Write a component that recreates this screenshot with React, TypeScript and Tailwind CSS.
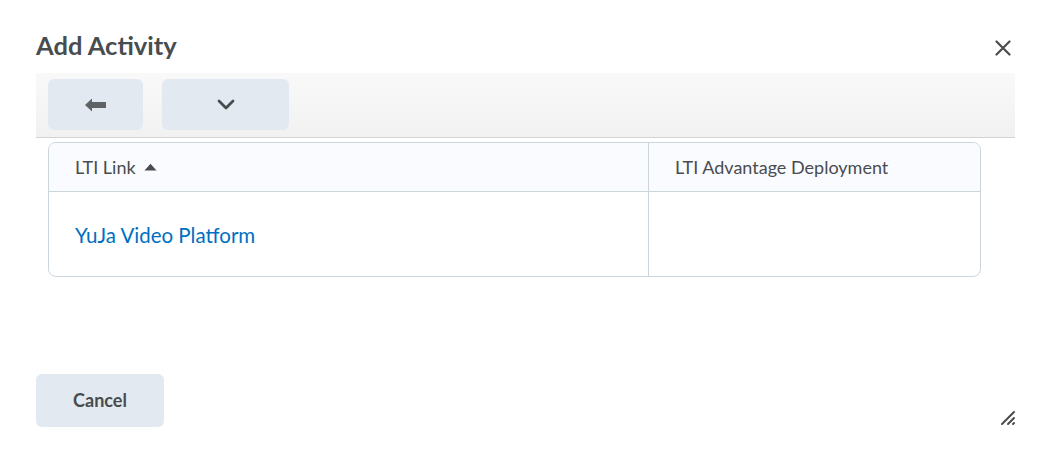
import React from "react";

function BackArrow() {
  return (
    <svg width="21" height="14" viewBox="0 0 21 14" fill="#5f6366">
      <path d="M0 7 L7 0.5 L7 4 L21 4 L21 10 L7 10 L7 13.5 Z" />
    </svg>
  );
}

function Chevron() {
  return (
    <svg width="18" height="11" viewBox="0 0 18 11" fill="none" stroke="#494c4e" strokeWidth="2.8" strokeLinecap="round" strokeLinejoin="round">
      <path d="M2 2 L9 9 L16 2" />
    </svg>
  );
}

export default function App() {
  return (
    <div
      className="relative w-[1049px] h-[461px] bg-white text-[#494c4e] overflow-hidden"
      style={{ fontFamily: "Lato, 'Noto Sans', sans-serif" }}
    >
      <div className="pl-[36px] pr-[34px]">
        {/* header */}
        <div className="flex items-center justify-between h-[73px] pt-[18px]">
          <h2 className="text-[25.5px] font-bold leading-none text-[#494c4e]">Add Activity</h2>
          <button className="w-[24px] h-[24px] flex items-center justify-center mt-[4px]">
            <svg width="16" height="16" viewBox="0 0 16 16" stroke="#494c4e" strokeWidth="2.2" strokeLinecap="round">
              <path d="M1.5 1.5 L14.5 14.5 M14.5 1.5 L1.5 14.5" />
            </svg>
          </button>
        </div>

        {/* toolbar */}
        <div className="h-[65px] bg-gradient-to-b from-[#f9f9f9] to-[#f1f1f1] border-b border-[#d3d3d3] flex items-start gap-[19px] pl-[12px] pt-[6px]">
          <button className="w-[95px] h-[51px] rounded-[6px] bg-[#e3e9f1] flex items-center justify-center">
            <BackArrow />
          </button>
          <button className="w-[127px] h-[51px] rounded-[6px] bg-[#e3e9f1] flex items-center justify-center">
            <Chevron />
          </button>
        </div>

        {/* table */}
        <div className="mt-[4px] ml-[12px] w-[933px] border border-[#cdd5dc] rounded-[8px] overflow-hidden">
          <div className="grid grid-cols-[600px_1fr] bg-[#f9fbff] border-b border-[#cdd5dc] h-[49px]">
            <div className="flex items-center pl-[26px] border-r border-[#cdd5dc] text-[18px]">
              <span>LTI Link</span>
              <svg className="ml-[8px]" width="13" height="8" viewBox="0 0 13 8" fill="#494c4e">
                <path d="M0.5 7.5 L6.5 0.8 L12.5 7.5 Z" />
              </svg>
            </div>
            <div className="flex items-center pl-[26px] text-[18px]">LTI Advantage Deployment</div>
          </div>
          <div className="grid grid-cols-[600px_1fr] h-[84px]">
            <div className="flex items-center pl-[26px] pt-[2px] border-r border-[#cdd5dc]">
              <a className="text-[20.5px] text-[#006fbf]">YuJa Video Platform</a>
            </div>
            <div />
          </div>
        </div>

        {/* footer */}
        <div className="mt-[97px]">
          <button className="w-[128px] h-[53px] rounded-[6px] bg-[#e3e9f1] text-[18px] font-bold text-[#494c4e]">
            Cancel
          </button>
        </div>
      </div>

      {/* resize grip */}
      <svg className="absolute right-[33px] bottom-[35px]" width="16" height="16" viewBox="0 0 16 16" stroke="#494c4e" strokeWidth="2" strokeLinecap="round">
        <path d="M2 14 L14 2 M8 14 L14 8 M13 14 L14 13" />
      </svg>
    </div>
  );
}
